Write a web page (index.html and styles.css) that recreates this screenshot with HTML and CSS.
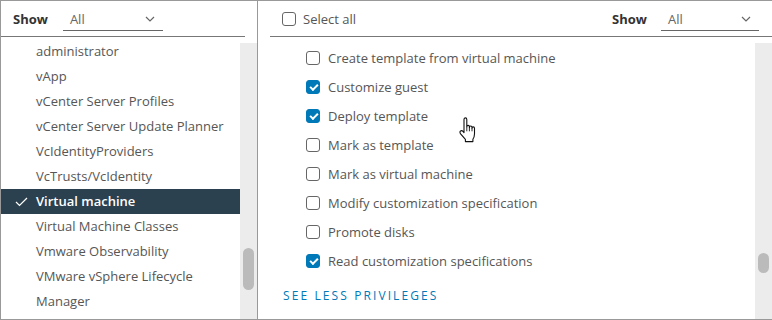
FILE: index.html
```html
<!DOCTYPE html>
<html lang="en">
<head>
  <meta charset="UTF-8">
  <title>Privileges</title>
  <link rel="stylesheet" href="styles.css">
</head>
<body>
  <div class="frame">
    <!-- Categories -->
    <div class="pane left">
      <div class="pane-head">
        <span class="show-label">Show</span>
        <div class="select narrow">
          <span>All</span>
          <svg class="chev" width="10" height="6" viewBox="0 0 10 6"><polyline points="1,1 5,5 9,1" fill="none" stroke="#666" stroke-width="1.2"/></svg>
        </div>
      </div>
      <div class="pane-body">
        <ul class="cat-list">
          <li>administrator</li>
          <li>vApp</li>
          <li>vCenter Server Profiles</li>
          <li>vCenter Server Update Planner</li>
          <li>VcIdentityProviders</li>
          <li>VcTrusts/VcIdentity</li>
          <li class="active">
            <svg class="tick" width="13" height="10" viewBox="0 0 13 10"><polyline points="1,5 4.5,8.5 12,1" fill="none" stroke="#fff" stroke-width="1.2"/></svg>
            Virtual machine
          </li>
          <li>Virtual Machine Classes</li>
          <li>Vmware Observability</li>
          <li>VMware vSphere Lifecycle</li>
          <li>Manager</li>
        </ul>
        <div class="track">
          <div class="thumb left-thumb"></div>
        </div>
      </div>
    </div>

    <!-- Privileges -->
    <div class="pane right">
      <div class="pane-head">
        <label class="check-row">
          <span class="box"></span>
          Select all
        </label>
        <div class="head-right">
          <span class="show-label">Show</span>
          <div class="select wide">
            <span>All</span>
            <svg class="chev" width="10" height="6" viewBox="0 0 10 6"><polyline points="1,1 5,5 9,1" fill="none" stroke="#666" stroke-width="1.2"/></svg>
          </div>
        </div>
      </div>
      <div class="pane-body">
        <div class="priv-wrap">
          <ul class="priv-list">
            <li><span class="box"></span>Create template from virtual machine</li>
            <li><span class="box on"></span>Customize guest</li>
            <li><span class="box on"></span>Deploy template</li>
            <li><span class="box"></span>Mark as template</li>
            <li><span class="box"></span>Mark as virtual machine</li>
            <li><span class="box"></span>Modify customization specification</li>
            <li><span class="box"></span>Promote disks</li>
            <li><span class="box on"></span>Read customization specifications</li>
          </ul>
          <a class="see-less">SEE LESS PRIVILEGES</a>
        </div>
        <div class="track">
          <div class="thumb right-thumb"></div>
        </div>
      </div>
      <!-- mouse pointer -->
      <svg class="cursor" width="20" height="26" viewBox="0 0 20 26">
        <path d="M6 2.5c0-1 .6-1.6 1.4-1.6s1.4.6 1.4 1.6v7.3c0-.9.6-1.4 1.3-1.4s1.3.5 1.3 1.4v.6c0-.9.6-1.4 1.3-1.4s1.3.5 1.3 1.4v.8c0-.8.6-1.3 1.2-1.3s1.3.5 1.3 1.3v5.6c0 2.5-.6 4-1.6 5.4v2.4H7.4v-2.2L2.6 16.8c-.8-1-.9-2.2-.1-2.8.7-.6 1.8-.4 2.5.4L6 15.6z" fill="#fff" stroke="#111" stroke-width="1.1" stroke-linejoin="round"/>
        <path d="M8.8 9.8v4.5M11.4 10.4v3.9M14 11.2v3.1" stroke="#111" stroke-width="0.9"/>
      </svg>
    </div>
  </div>
</body>
</html>
```

FILE: styles.css
```css
body {
  margin: 0;
  background-color: #ffffff;
  font-family: "Open Sans", "Liberation Sans", sans-serif;
  font-size: 13px;
  color: #565656;
}

.frame {
  display: grid;
  grid-template-columns: 257px 1fr;
  width: 772px;
  height: 320px;
  box-sizing: border-box;
  border: 1px solid #999;
  border-right: none;
  overflow: hidden;
}

.pane {
  display: flex;
  flex-direction: column;
  min-height: 0;
  position: relative;
}

.pane.left {
  border-right: 1px solid #999;
}

.pane-head {
  display: flex;
  align-items: center;
  height: 35px;
  flex-shrink: 0;
  border-bottom: 1px solid #777;
}

.left .pane-head {
  padding-left: 12px;
  margin-right: 12px;
}

.right .pane-head {
  margin-left: 12px;
  padding-left: 12px;
  justify-content: space-between;
}

.show-label {
  font-weight: 700;
  color: #333;
  margin-right: 15px;
}

.select {
  display: flex;
  align-items: center;
  justify-content: space-between;
  height: 22px;
  padding: 0 8px 0 7px;
  box-sizing: border-box;
  border-bottom: 1px solid #666;
  margin-top: 2px;
  color: #666;
}

.select.narrow {
  width: 100px;
}

.select.wide {
  width: 98px;
}

.head-right {
  display: flex;
  align-items: center;
  margin-right: 13px;
}

.head-right .show-label {
  margin-right: 14px;
}

.pane-body {
  display: flex;
  flex: 1;
  min-height: 0;
}

.cat-list {
  list-style: none;
  margin: 0;
  padding: 2px 0 0 0;
  width: 239px;
}

.cat-list li {
  height: 25px;
  line-height: 25px;
  padding-left: 35px;
  white-space: nowrap;
  position: relative;
}

.cat-list li.active {
  background-color: #2b4150;
  color: #ffffff;
  font-weight: 600;
}

.tick {
  position: absolute;
  left: 14px;
  top: 8px;
}

.track {
  width: 17px;
  margin-top: 6px;
  background-color: #ececec;
  position: relative;
  flex-shrink: 0;
}

.thumb {
  position: absolute;
  left: 3px;
  width: 11px;
  border-radius: 6px;
  background-color: #bbbbbb;
}

.left-thumb {
  top: 205px;
  height: 42px;
}

.right-thumb {
  top: 210px;
  height: 20px;
}

.priv-wrap {
  flex: 1;
}

.priv-list {
  list-style: none;
  margin: 0;
  padding: 6px 0 0 48px;
}

.priv-list li {
  display: flex;
  align-items: center;
  height: 29px;
}

.box {
  display: inline-block;
  width: 14px;
  height: 14px;
  box-sizing: border-box;
  border: 1px solid #666;
  border-radius: 3px;
  margin-right: 8px;
  position: relative;
}

.box.on {
  background-color: #0079b8;
  border-color: #0079b8;
}

.box.on::after {
  content: "";
  position: absolute;
  left: 3px;
  top: 3px;
  width: 6px;
  height: 3px;
  border-left: 2px solid #fff;
  border-bottom: 2px solid #fff;
  transform: rotate(-45deg);
}

.check-row {
  display: flex;
  align-items: center;
}

.check-row .box {
  margin-right: 7px;
}

.see-less {
  display: block;
  margin: 12px 0 0 25px;
  color: #0079b8;
  font-size: 12px;
  letter-spacing: 2.1px;
}

.cursor {
  position: absolute;
  left: 200px;
  top: 116px;
}
```
